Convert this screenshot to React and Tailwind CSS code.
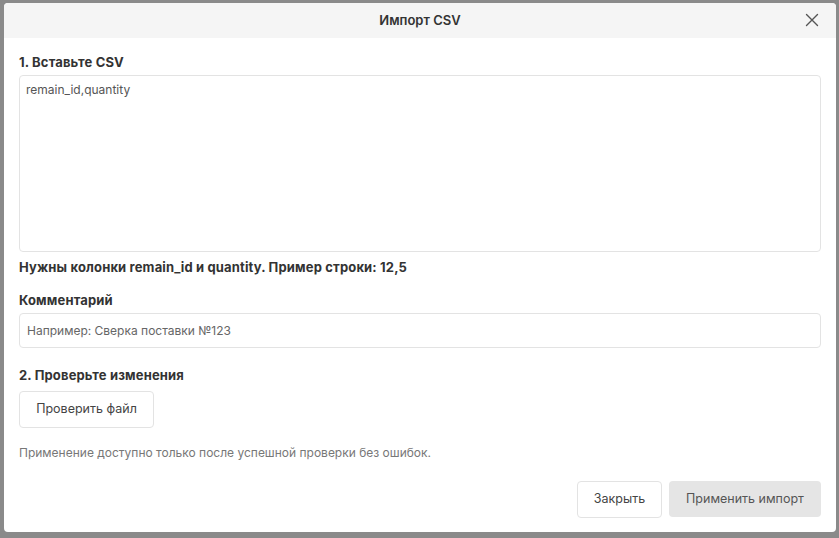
import React from 'react';

export default function App() {
    return (
        <div className="w-[839px] h-[538px] bg-[#8a8a8a] pt-[3px] pl-[4px]" style={{ fontFamily: 'Inter, "Noto Sans", sans-serif' }}>
            <div className="w-[832px] h-[529px] bg-white rounded-[4px] overflow-hidden flex flex-col">
                <div className="h-[35px] bg-[#f5f5f5] relative flex items-center justify-center">
                    <span className="text-[13px] font-semibold text-[#333]">Импорт CSV</span>
                    <button className="absolute right-[14px] top-[7px] text-[#555]">
                        <svg width="20" height="20" viewBox="0 0 20 20" fill="none" stroke="currentColor" strokeWidth="1.4" strokeLinecap="round">
                            <path d="M4.5 4.5L15.5 15.5M15.5 4.5L4.5 15.5" />
                        </svg>
                    </button>
                </div>
                <div className="px-[15px] pt-[15px] flex flex-col">
                    <div className="text-[13px] font-bold tracking-[0.15px] text-[#333] leading-[18px]">1. Вставьте CSV</div>
                    <textarea
                        className="mt-[4px] h-[177px] border border-[#e3e3e3] rounded-[4px] px-[6px] py-[5px] text-[12px] text-[#555] resize-none outline-none"
                        defaultValue="remain_id,quantity"
                    />
                    <div className="mt-[6px] text-[13px] font-bold tracking-[0.15px] text-[#333] leading-[18px]">Нужны колонки remain_id и quantity. Пример строки: 12,5</div>
                    <div className="mt-[15px] text-[13px] font-bold tracking-[0.15px] text-[#333] leading-[18px]">Комментарий</div>
                    <input
                        className="mt-[4px] h-[35px] border border-[#e3e3e3] rounded-[4px] px-[7px] text-[12px] text-[#555] outline-none placeholder:text-[#666]"
                        placeholder="Например: Сверка поставки №123"
                    />
                    <div className="mt-[18px] text-[13px] font-bold tracking-[0.15px] text-[#333] leading-[18px]">2. Проверьте изменения</div>
                    <div>
                        <button className="mt-[7px] h-[37px] w-[135px] border border-[#e3e3e3] rounded-[4px] bg-white text-[12.5px] text-[#444]">Проверить файл</button>
                    </div>
                    <div className="mt-[17px] text-[12px] text-[#777] leading-[16px]">Применение доступно только после успешной проверки без ошибок.</div>
                    <div className="mt-[20px] flex justify-end gap-[7px]">
                        <button className="h-[37px] w-[85px] border border-[#e3e3e3] rounded-[4px] bg-white text-[12.5px] text-[#444]">Закрыть</button>
                        <button className="h-[36px] w-[152px] rounded-[4px] bg-[#e5e5e5] text-[12.5px] text-[#555]">Применить импорт</button>
                    </div>
                </div>
            </div>
        </div>
    );
}
